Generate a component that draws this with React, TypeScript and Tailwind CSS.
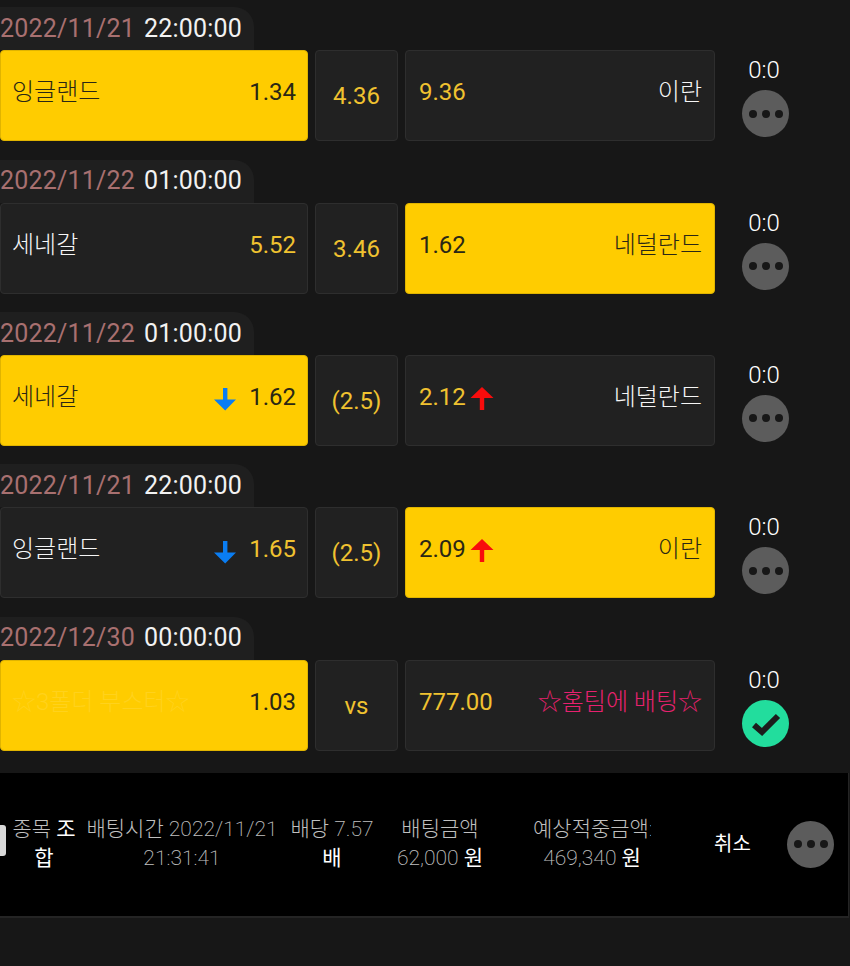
import React from "react";

const F = "font-['Roboto','Noto_Sans_CJK_KR',sans-serif]";

type Row = {
  date: string; time: string; home: string; homeOdd: string; mid: string; awayOdd: string; away: string;
  sel: "home" | "away"; homeArrow?: boolean; awayArrow?: boolean; done?: boolean; special?: boolean;
};

const rows: Row[] = [
  { date: "2022/11/21", time: "22:00:00", home: "잉글랜드", homeOdd: "1.34", mid: "4.36", awayOdd: "9.36", away: "이란", sel: "home" },
  { date: "2022/11/22", time: "01:00:00", home: "세네갈", homeOdd: "5.52", mid: "3.46", awayOdd: "1.62", away: "네덜란드", sel: "away" },
  { date: "2022/11/22", time: "01:00:00", home: "세네갈", homeOdd: "1.62", mid: "(2.5)", awayOdd: "2.12", away: "네덜란드", sel: "home", homeArrow: true, awayArrow: true },
  { date: "2022/11/21", time: "22:00:00", home: "잉글랜드", homeOdd: "1.65", mid: "(2.5)", awayOdd: "2.09", away: "이란", sel: "away", homeArrow: true, awayArrow: true },
  { date: "2022/12/30", time: "00:00:00", home: "☆3폴더 부스터☆", homeOdd: "1.03", mid: "vs", awayOdd: "777.00", away: "☆홈팀에 배팅☆", sel: "home", done: true, special: true },
];

function DownArrow() {
  return (
    <svg width="24" height="24" viewBox="0 0 24 24" className="shrink-0">
      <path d="M10 1h4.4v11.5H23L12.2 23.5 1 12.5h9z" fill="#0a7df2" />
    </svg>
  );
}

function UpArrow() {
  return (
    <svg width="24" height="24" viewBox="0 0 24 24" className="shrink-0">
      <path d="M12 1 23.5 12H14.2V24H9.8V12H.5z" fill="#f80c0c" />
    </svg>
  );
}

function MoreButton() {
  return (
    <div className="flex h-[47px] w-[47px] shrink-0 items-center justify-center gap-[5px] rounded-full bg-[#5c5c5c]">
      <span className="h-[8px] w-[8px] rounded-full bg-[#171717]" />
      <span className="h-[8px] w-[8px] rounded-full bg-[#171717]" />
      <span className="h-[8px] w-[8px] rounded-full bg-[#171717]" />
    </div>
  );
}

function DoneButton() {
  return (
    <div className="h-[47px] w-[47px] shrink-0 rounded-full bg-[#22dd9d]">
      <svg width="47" height="47" viewBox="0 0 47 47">
        <path d="M12 25l8 7L36 16" fill="none" stroke="#1c1c1c" strokeWidth="6" />
      </svg>
    </div>
  );
}

function MatchRow({ r }: { r: Row }) {
  const on = "bg-[#ffcc00] border-[#e0b400] text-[#2a2715]";
  const off = "bg-[#212121] border-[#2e2e2e] text-[#f6f6f6]";
  const homeOn = r.sel === "home";
  const awayOn = r.sel === "away";
  return (
    <div className="h-[152.3px] shrink-0">
      <div className="flex h-[43px] w-[254px] items-center rounded-tr-[20px] bg-[#1f1f1f] text-[25px] tracking-[0.2px] font-normal">
        <span className="text-[#a87070]">{r.date}</span>
        <span className="ml-[9px] text-[#f2f2f2]">{r.time}</span>
      </div>
      <div className="flex h-[91px] items-stretch">
        <div className={`flex w-[308px] rounded-[4px] border pl-[11px] pr-[11px] pt-[25px] ${homeOn ? on : off}`}>
          <span className={`text-[24px] leading-[32px] font-light ${r.special ? "text-[#ffd21c]" : ""}`}>{r.home}</span>
          <div className="ml-auto flex h-[32px] items-center">
            {r.homeArrow && <div className="mr-[12px] mt-[5px]"><DownArrow /></div>}
            <span className={`text-[24px] font-normal ${homeOn ? "" : "text-[#f0c230]"}`}>{r.homeOdd}</span>
          </div>
        </div>
        <div className="ml-[7px] flex w-[83px] items-center justify-center rounded-[4px] border border-[#2e2e2e] bg-[#212121] pt-[1px] text-[24px] font-normal text-[#f0c230]">
          {r.mid}
        </div>
        <div className={`ml-[7px] flex w-[310px] rounded-[4px] border pl-[13px] pr-[12px] pt-[25px] ${awayOn ? on : off}`}>
          <div className="flex h-[32px] items-center">
            <span className={`text-[24px] font-normal ${awayOn ? "" : "text-[#f0c230]"}`}>{r.awayOdd}</span>
            {r.awayArrow && <div className="ml-[4px] mt-[2px]"><UpArrow /></div>}
          </div>
          <span className={`ml-auto text-[24px] leading-[32px] font-light ${r.special ? "text-[#e8216f]" : ""}`}>{r.away}</span>
        </div>
        <div className="ml-[27px] flex w-[47px] flex-col items-center">
          <span className="mt-[3px] h-[37px] text-[24px] leading-[34px] font-light text-white -ml-[3px]">0:0</span>
          {r.done ? <DoneButton /> : <MoreButton />}
        </div>
      </div>
    </div>
  );
}

function Stat({ w, ml, children }: { w: string; ml: string; children: React.ReactNode }) {
  return <div className={`${w} ${ml} shrink-0 text-center text-[21px] leading-[29px] font-extralight text-[#c0c0c0]`}>{children}</div>;
}

export default function App() {
  return (
    <div className={`flex h-[966px] w-[850px] flex-col overflow-hidden bg-[#171717] pt-[7.4px] antialiased ${F}`}>
      {rows.map((r, i) => <MatchRow key={i} r={r} />)}
      <div className="mt-[4px] flex h-[145px] w-[849px] shrink-0 items-center border-r border-b-2 border-[#242424] bg-black">
        <div className="-ml-[3px] -mt-[7px] h-[31px] w-[9px] shrink-0 rounded-[3px] bg-[#d8d8d8]" />
        <Stat w="w-[66px]" ml="ml-[5px]">종목 <b className="font-normal text-white">조 합</b></Stat>
        <Stat w="w-[194px]" ml="ml-[8px]">배팅시간 2022/11/21 21:31:41</Stat>
        <Stat w="w-[84px]" ml="ml-[11px]">배당 7.57 <b className="font-normal text-white">배</b></Stat>
        <Stat w="w-[90px]" ml="ml-[21px]">배팅금액 62,000 <b className="font-normal text-white">원</b></Stat>
        <div className="ml-[48px] w-[118px] shrink-0 overflow-hidden whitespace-nowrap text-center text-[21px] leading-[29px] font-extralight text-[#c0c0c0]">
          <div>예상적중금액:</div>
          <div>469,340 <b className="font-normal text-white">원</b></div>
        </div>
        <span className="ml-[63px] w-[38px] shrink-0 whitespace-nowrap text-[20px] font-normal text-white">취소</span>
        <div className="ml-[35px]"><MoreButton /></div>
      </div>
    </div>
  );
}
